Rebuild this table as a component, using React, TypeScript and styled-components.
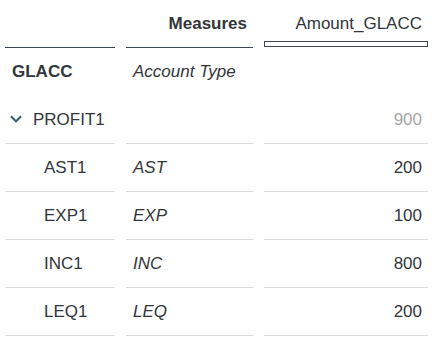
import React from "react";
import styled, { createGlobalStyle, css } from "styled-components";

type Row = {
  id: string;
  type: string;
  amount: string;
};

const rows: Row[] = [
  { id: "AST1", type: "AST", amount: "200" },
  { id: "EXP1", type: "EXP", amount: "100" },
  { id: "INC1", type: "INC", amount: "800" },
  { id: "LEQ1", type: "LEQ", amount: "200" },
];

const GlobalStyle = createGlobalStyle`
  html, body {
    margin: 0;
    padding: 0;
    background: #fff;
  }
  body {
    font-family: "Liberation Sans", Arial, sans-serif;
    color: #32363a;
  }
`;

const App: React.FC = () => {
  return (
    <>
      <GlobalStyle />
      <Table>
        <HeadCell />
        <HeadCell $align="right">
          <b>Measures</b>
        </HeadCell>
        <MeasureHead>
          <MeasureLabel>Amount_GLACC</MeasureLabel>
          <SelectBox />
        </MeasureHead>

        <Cell $noBorder>
          <b>GLACC</b>
        </Cell>
        <Cell $noBorder $italic>
          Account Type
        </Cell>
        <Cell $noBorder />

        <Cell>
          <Chevron viewBox="0 0 12 8">
            <path d="M1 1.2 L6 6.4 L11 1.2" />
          </Chevron>
          PROFIT1
        </Cell>
        <Cell />
        <Cell $align="right" $muted>
          900
        </Cell>

        {rows.map((row) => (
          <React.Fragment key={row.id}>
            <Cell $indent>{row.id}</Cell>
            <Cell $italic>{row.type}</Cell>
            <Cell $align="right">{row.amount}</Cell>
          </React.Fragment>
        ))}
      </Table>
    </>
  );
};

export default App;

const Table = styled.div`
  display: grid;
  grid-template-columns: 110px 127px 164px;
  grid-auto-rows: 48px;
  column-gap: 11px;
  padding-left: 5px;
  font-size: 17px;
  line-height: 20px;
`;

const HeadCell = styled.div<{ $align?: "left" | "right" }>`
  display: flex;
  align-items: center;
  justify-content: ${(p) => (p.$align === "right" ? "flex-end" : "flex-start")};
  padding: 0 6px 0 7px;
  border-bottom: 1px solid #3d4651;
  b {
    font-weight: 700;
  }
`;

const MeasureHead = styled.div`
  display: grid;
  & > * {
    grid-area: 1 / 1;
  }
`;

const MeasureLabel = styled.div`
  display: flex;
  align-items: center;
  justify-content: flex-end;
  padding-right: 6px;
  padding-bottom: 1px;
`;

const SelectBox = styled.div`
  align-self: end;
  height: 6px;
  margin-bottom: 1px;
  border: 1px solid #3d4651;
  box-sizing: border-box;
`;

type CellProps = {
  $align?: "left" | "right";
  $italic?: boolean;
  $muted?: boolean;
  $indent?: boolean;
  $noBorder?: boolean;
};

const Cell = styled.div<CellProps>`
  display: flex;
  align-items: center;
  justify-content: ${(p) => (p.$align === "right" ? "flex-end" : "flex-start")};
  padding: 0 6px 0 ${(p) => (p.$indent ? "39px" : "7px")};
  border-bottom: 1px solid ${(p) => (p.$noBorder ? "transparent" : "#d9d9d9")};
  color: ${(p) => (p.$muted ? "#a6a6a6" : "#32363a")};
  ${(p) =>
    p.$italic &&
    css`
      font-style: italic;
    `}
  b {
    font-weight: 700;
  }
`;

const Chevron = styled.svg`
  width: 12px;
  height: 8px;
  margin: 0 11px 2px -2px;
  fill: none;
  stroke: #34587c;
  stroke-width: 2;
`;
